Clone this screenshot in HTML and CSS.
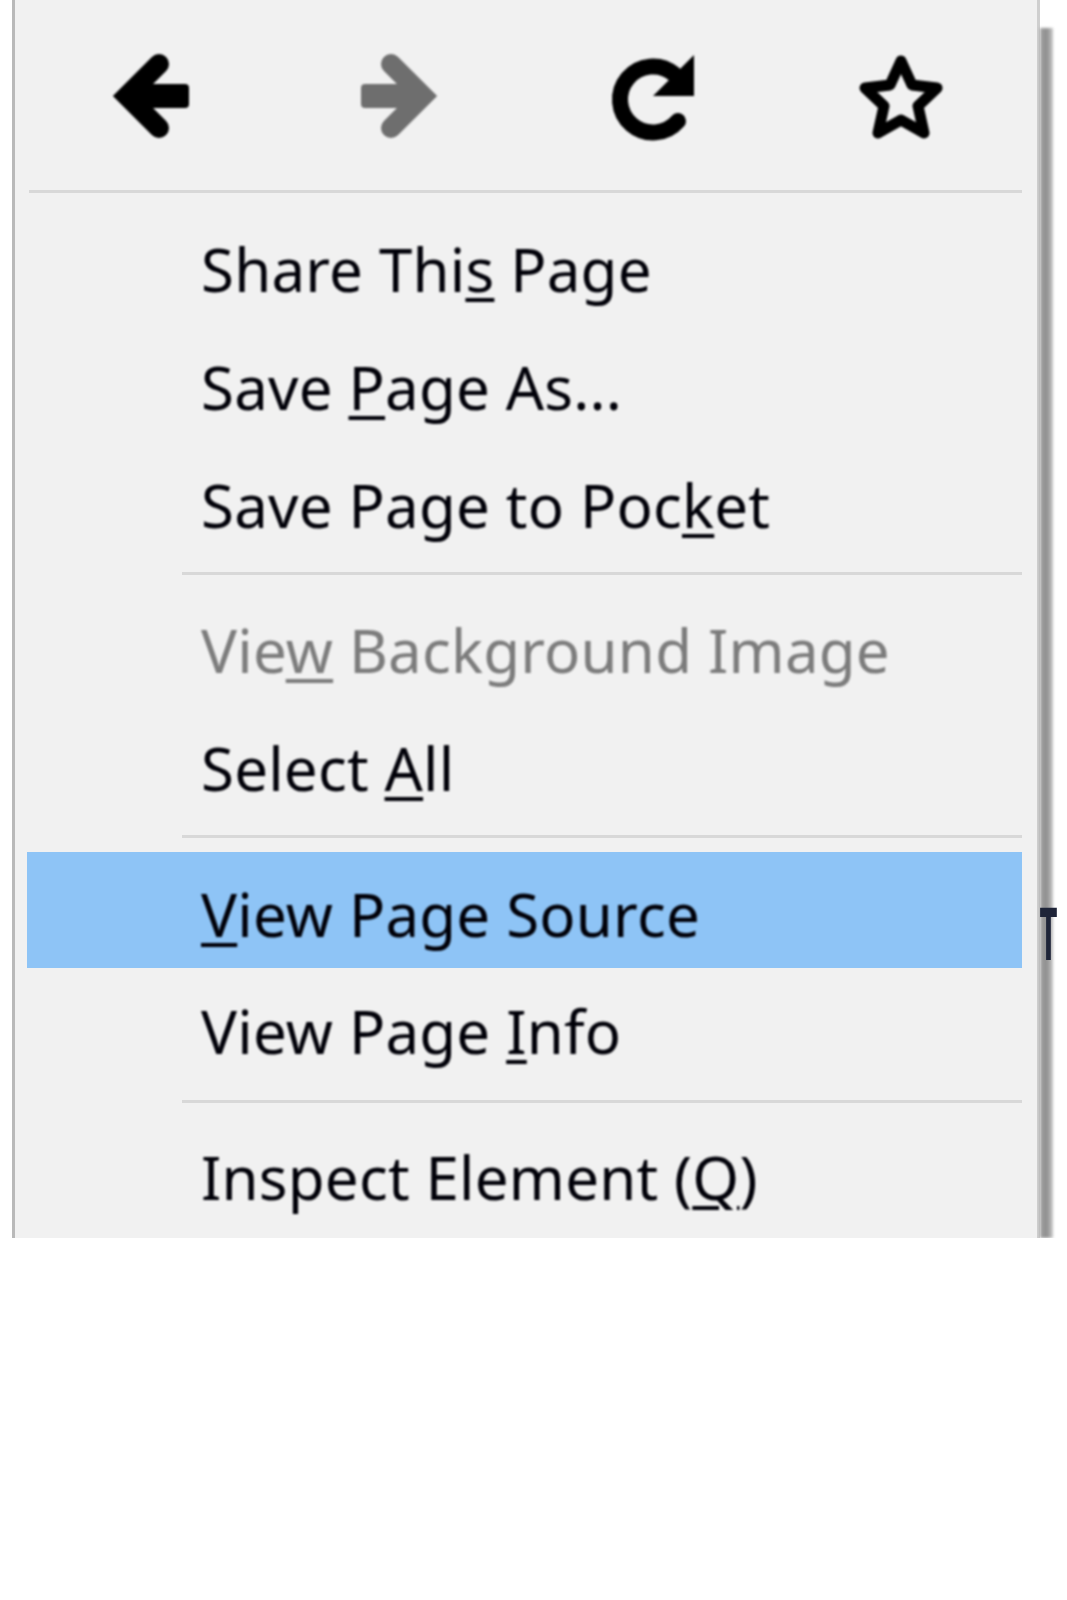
FILE: index.html
```html
<!DOCTYPE html>
<html lang="en">
<head>
  <meta charset="UTF-8" />
  <title>Context menu</title>
  <link rel="stylesheet" href="styles.css">
</head>
<body>

  <div class="menu-wrap">
    <div class="menu">

      <!-- Navigation icons -->
      <div class="menu-icons">
        <svg class="icon" viewBox="103 46 100 100">
          <polyline class="arrow" points="159,64 127,96 159,128" />
          <rect x="127" y="84" width="62" height="24" rx="4" />
        </svg>
        <svg class="icon icon-disabled" viewBox="351 46 100 100">
          <polyline class="arrow" points="391,64 423,96 391,128" />
          <rect x="361" y="84" width="62" height="24" rx="4" />
        </svg>
        <svg class="icon" viewBox="599 46 100 100">
          <path class="reload" d="M673 74 A33 33 0 1 0 677 121" />
          <polygon points="693,55 693,96 652,96" />
        </svg>
        <svg class="icon" viewBox="847 46 100 100">
          <polygon class="star" points="900,61 911,85 936,88 917,106 923,133 900,120 877,133 883,106 864,88 889,85" />
        </svg>
      </div>
      <div class="sep sep-full"></div>

      <!-- Menu items -->
      <ul class="menu-list first">
        <li class="menu-item"><span class="label">Share Thi<u>s</u> Page</span></li>
        <li class="menu-item"><span class="label">Save <u>P</u>age As...</span></li>
        <li class="menu-item"><span class="label">Save Page to Poc<u>k</u>et</span></li>
      </ul>
      <div class="sep"></div>
      <ul class="menu-list">
        <li class="menu-item disabled"><span class="label">Vie<u>w</u> Background Image</span></li>
        <li class="menu-item"><span class="label">Select <u>A</u>ll</span></li>
      </ul>
      <div class="sep"></div>
      <ul class="menu-list">
        <li class="menu-item active"><span class="label"><u>V</u>iew Page Source</span></li>
        <li class="menu-item"><span class="label">View Page <u>I</u>nfo</span></li>
      </ul>
      <div class="sep sep-last"></div>
      <ul class="menu-list">
        <li class="menu-item"><span class="label">Inspect Element (<u>Q</u>)</span></li>
      </ul>
    </div>
    <div class="menu-shadow"></div>
    <div class="page-letter">T</div>
  </div>

</body>
</html>
```

FILE: styles.css
```css
* {
  margin: 0;
  padding: 0;
  box-sizing: border-box;
}

body {
  background: #fff;
  font-family: "Noto Sans", "Open Sans", sans-serif;
}

.menu-wrap {
  display: flex;
  position: relative;
  padding-left: 12px;
}

/* ========== Menu panel ========== */
.menu {
  width: 1028px;
  height: 1238px;
  padding: 0 15px 0 14px;
  background: #f1f1f1;
  border-left: 3px solid #b9b9b9;
  border-right: 3px solid #cfcfcf;
}

.menu-shadow {
  width: 13px;
  height: 1210px;
  margin-top: 28px;
  background: linear-gradient(to right, #a3a3a3, #8e8e8e 50%, #c8c8c8);
  filter: blur(1.5px);
}

.page-letter {
  position: absolute;
  left: 1028px;
  top: 905px;
  width: 40px;
  color: #1e2438;
  font-size: 74px;
  font-weight: 700;
  line-height: 54px;
  text-align: center;
  transform: scaleX(0.42);
  filter: blur(0.6px);
}

/* ========== Icons ========== */
.menu-icons {
  display: grid;
  grid-template-columns: repeat(4, 1fr);
  height: 190px;
  padding-top: 46px;
  justify-items: center;
  align-items: start;
}

.icon {
  width: 100px;
  height: 100px;
  fill: #000;
  filter: blur(1px);
}

.icon-disabled {
  fill: #6e6e6e;
}

.arrow {
  fill: none;
  stroke: #000;
  stroke-width: 20;
  stroke-linecap: round;
}

.icon-disabled .arrow {
  stroke: #6e6e6e;
}

.reload {
  fill: none;
  stroke: #000;
  stroke-width: 16;
  stroke-linecap: round;
}

.star {
  fill: none;
  stroke: #000;
  stroke-width: 11;
  stroke-linejoin: round;
}

/* ========== Separators ========== */
.sep {
  height: 3px;
  margin: 13px 0 12.5px 153px;
  background: #d8d8d8;
  filter: blur(0.5px);
}

.sep-full {
  margin: 0;
}

.sep-last {
  margin-top: 15px;
}

/* ========== Items ========== */
.menu-list {
  list-style: none;
}

.menu-list.first {
  margin-top: 14px;
}

.menu-item {
  display: flex;
  align-items: center;
  height: 116px;
  margin-bottom: 2.2px;
  padding: 8px 0 0 172px;
  color: #000008;
  font-size: 60px;
  letter-spacing: 0.2px;
  line-height: 1;
  white-space: nowrap;
}

.menu-item .label {
  filter: blur(0.9px);
}

.menu-item u {
  text-decoration-thickness: 4px;
  text-underline-offset: 6px;
}

.menu-item.disabled {
  color: #7c7c7c;
}

.menu-item.active {
  position: relative;
  top: 1px;
  margin-left: -2px;
  padding-left: 174px;
  background: #8ec4f6;
}
```
